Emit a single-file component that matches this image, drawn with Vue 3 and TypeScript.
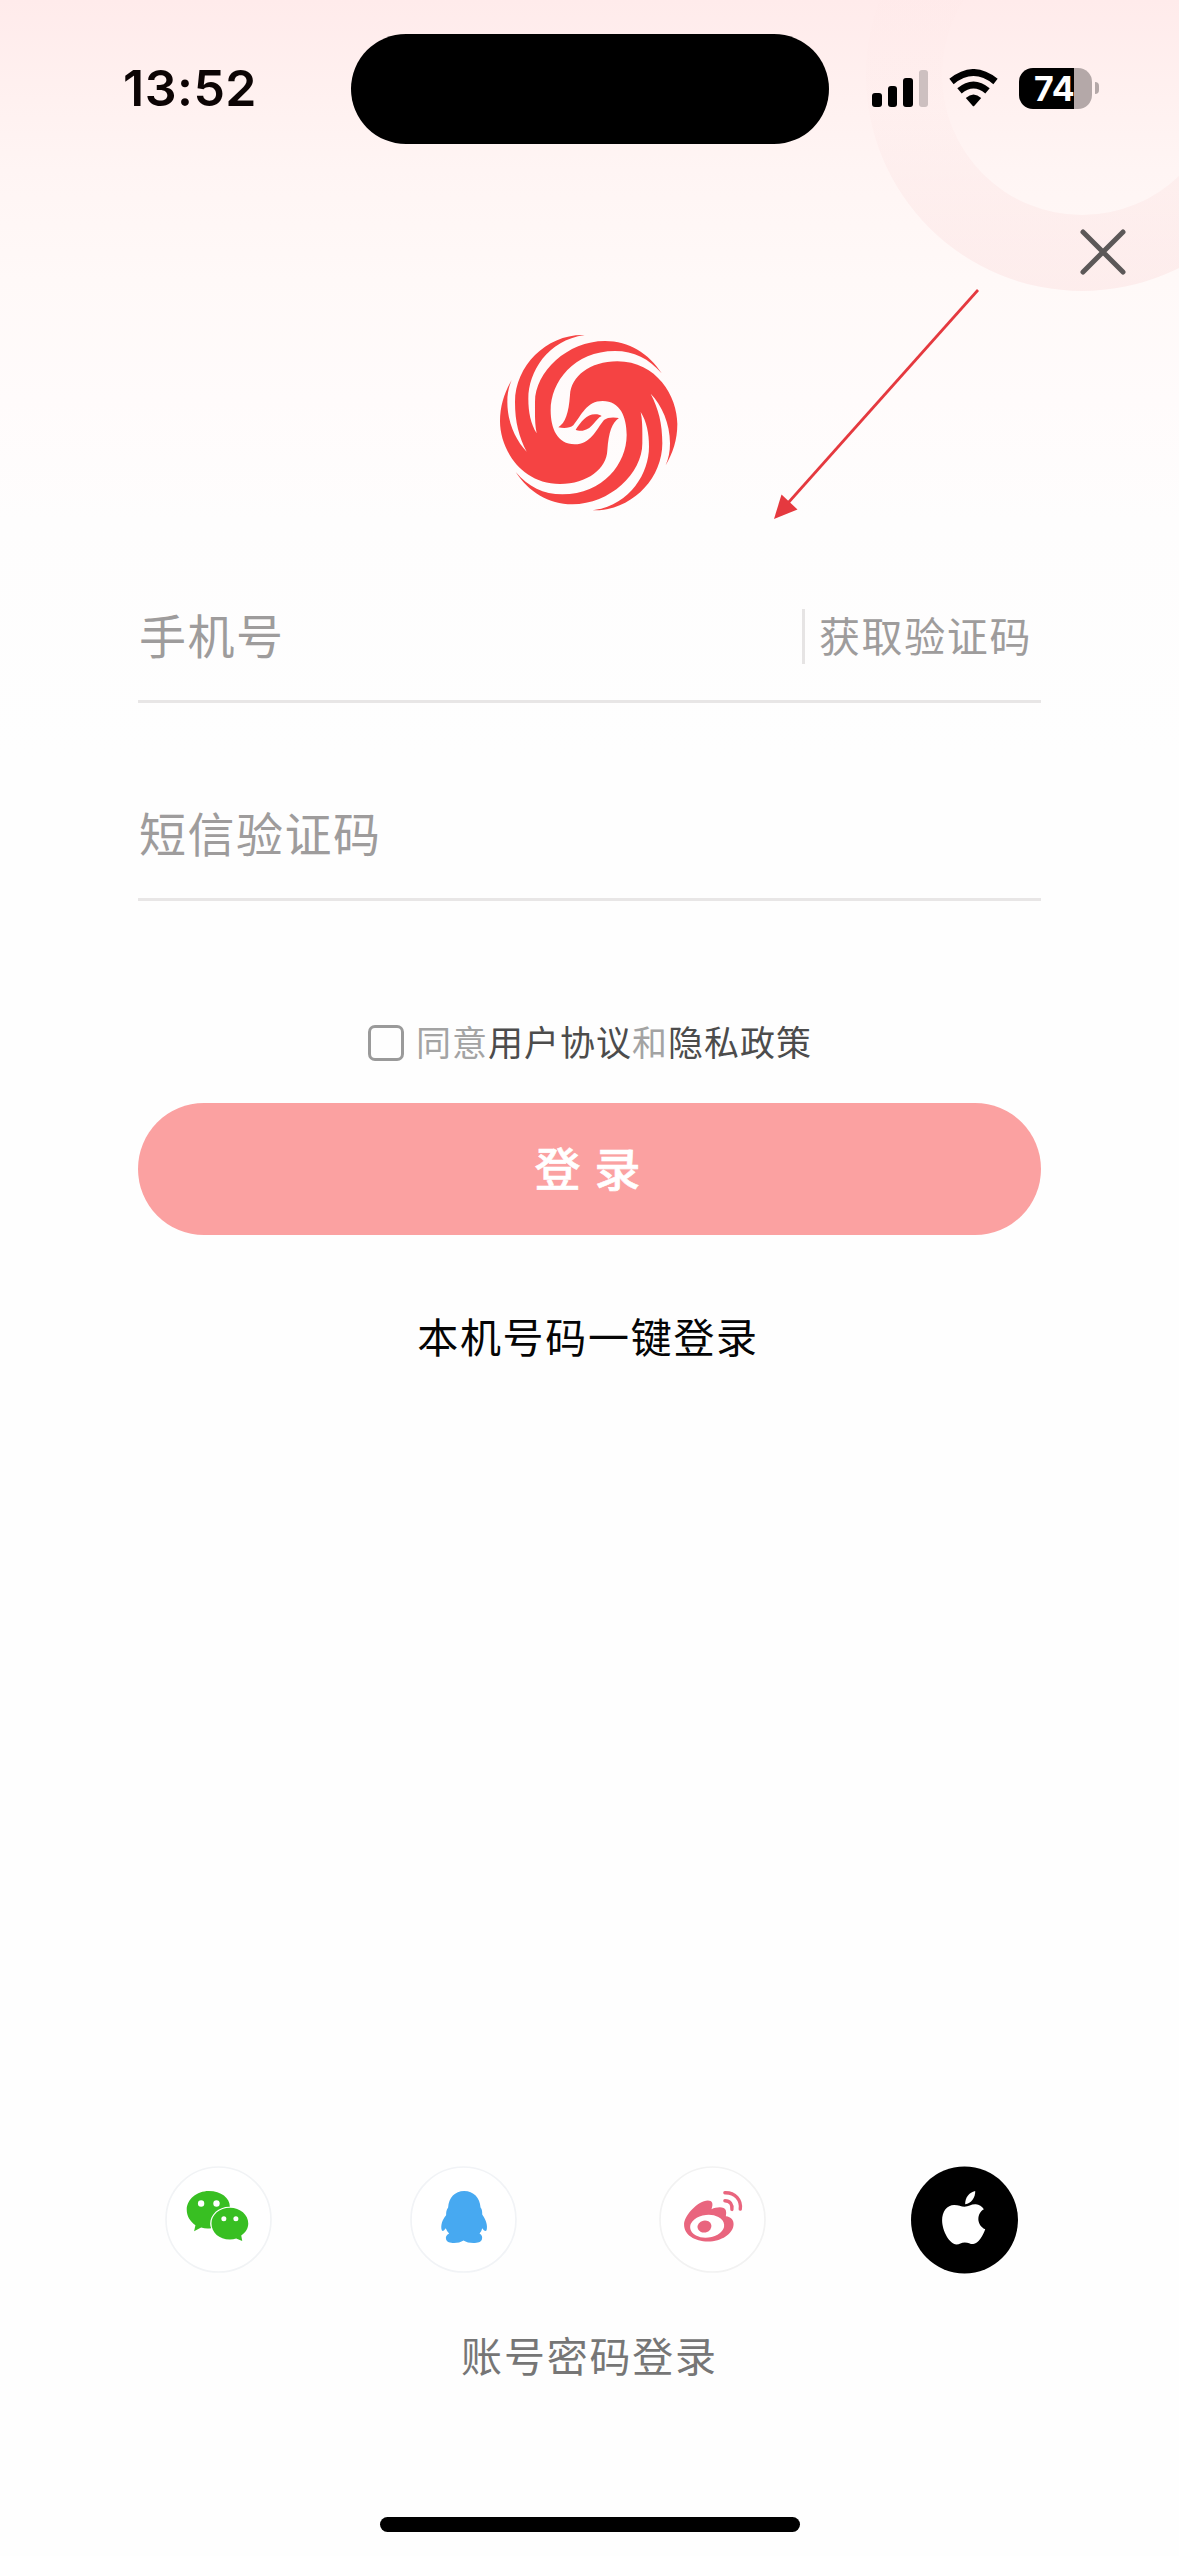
<script setup lang="ts">
import { ref } from 'vue'

interface Segment {
  text: string
  link: boolean
}

const time = '13:52'
const battery = 74
const agreed = ref(false)
const signalBars = [
  { height: 14, on: true },
  { height: 21, on: true },
  { height: 29, on: true },
  { height: 37, on: false },
]
const agreement: Segment[] = [
  { text: '同意', link: false },
  { text: '用户协议', link: true },
  { text: '和', link: false },
  { text: '隐私政策', link: true },
]
</script>

<template>
  <main class="screen">
    <svg class="ring" width="1179" height="320" viewBox="0 0 1179 320">
      <defs>
        <linearGradient id="ringFade" x1="0" y1="0" x2="0" y2="291" gradientUnits="userSpaceOnUse">
          <stop offset="0" stop-color="#fbdcdc" stop-opacity="0.04" />
          <stop offset="0.35" stop-color="#fbdcdc" stop-opacity="0.08" />
          <stop offset="0.6" stop-color="#fbdcdc" stop-opacity="0.26" />
          <stop offset="1" stop-color="#fbdcdc" stop-opacity="0.42" />
        </linearGradient>
      </defs>
      <path
        fill="url(#ringFade)"
        fill-rule="evenodd"
        d="M866 75a216 216 0 1 0 432 0a216 216 0 1 0-432 0ZM942 75a140 140 0 1 0 280 0a140 140 0 1 0-280 0Z"
      />
    </svg>

    <header class="status">
      <div class="time">{{ time }}</div>
      <div class="island"></div>
      <div class="indicators">
        <div class="signal">
          <i v-for="(bar, i) in signalBars" :key="i" :class="{ off: !bar.on }" :style="{ height: bar.height + 'px' }"></i>
        </div>
        <svg class="wifi" width="49" height="38" viewBox="0 0 49 38">
          <path d="M2.500 12.500Q24.500-5.500 46.500 12.500" fill="none" stroke="#000" stroke-width="6.800" />
          <path d="M10.500 21.800Q24.500 10 38.500 21.800" fill="none" stroke="#000" stroke-width="6.800" />
          <path d="M16.800 29Q24.500 22 32.200 29L25.400 36.800Q24.500 37.800 23.600 36.800Z" />
        </svg>
        <div class="battery"><span>{{ battery }}</span></div>
        <div class="nub"></div>
      </div>
    </header>

    <div class="close-row">
      <svg width="46" height="46" viewBox="0 0 46 46" fill="none" stroke="#5c5858" stroke-width="5" stroke-linecap="round">
        <path d="M3 3 43 43M43 3 3 43" />
      </svg>
    </div>

    <svg class="logo" width="220" height="210" viewBox="0 0 660 630" fill="#f54343">
      <defs>
        <path
          id="wing"
          d="M557 436C578 400 592 360 592 312C592 230 530 124 412 124C330 124 272 170 270 225C266 280 256 308 235 322C250 325 270 325 280 316C305 285 320 243 368 243C420 243 440 290 440 345C440 430 370 523 247 523C190 523 145 500 107 456C145 515 205 553 277 553C390 553 487 460 487 370C487 330 488 305 482 276C500 305 507 340 507 380C507 460 450 555 338 571C450 575 547 480 547 370C547 310 535 265 512 221C545 255 570 310 570 370C570 395 566 415 557 436Z"
        />
      </defs>
      <use href="#wing" />
      <use href="#wing" transform="rotate(180 326 308)" />
      <path d="M287 329C303 306 320 283 345 283C355 283 360 285 365 288C346 296 340 326 308 332C300 333 292 332 287 329Z" />
    </svg>

    <form class="form" @submit.prevent>
      <div class="field phone">
        <span class="hint">手机号</span>
        <span class="code"><span>获取验证码</span></span>
      </div>
      <div class="field sms"><span class="hint">短信验证码</span></div>

      <label class="agree">
        <span class="box" :class="{ checked: agreed }" @click="agreed = !agreed"></span>
        <span class="terms"><span v-for="s in agreement" :key="s.text" :class="{ link: s.link }">{{ s.text }}</span></span>
      </label>

      <button class="submit" type="submit"><span>登</span><span>录</span></button>
      <div class="one-tap">本机号码一键登录</div>
    </form>

    <div class="socials">
      <svg width="107" height="107" viewBox="48 47 320 320">
        <circle cx="208" cy="207" r="157" fill="#fff" stroke="#f1f3f5" stroke-width="5" />
        <g transform="translate(2 0)">
          <path fill="#38bf22" d="M177 122C214 122 240 143 240 169C207 168 181 192 181 220Q181 227 184 233Q168 235 154 231L133 242L137 224C121 213 111 197 111 178C111 147 141 122 177 122Z" />
          <path fill="#38bf22" d="M240 172C271 172 295 193 295 219C295 234 287 246 274 255L277 271L259 264Q250 267 240 267C208 267 185 246 185 219C185 193 209 172 240 172Z" />
          <g fill="#fff"><circle cx="154" cy="159" r="9.500" /><circle cx="200" cy="159" r="9.500" /><circle cx="222" cy="205" r="7.500" /><circle cx="258" cy="205" r="7.500" /></g>
        </g>
      </svg>
      <svg width="107" height="107" viewBox="781 47 320 320">
        <circle cx="941" cy="207" r="157" fill="#fff" stroke="#f1f3f6" stroke-width="5" />
        <path fill="#47a9f1" d="M943 122C971 122 990 142 992 171C997 177 997 184 997 192C1008 208 1014 225 1010 239C1007 244 1001 239 997 233Q995 243 989 249C997 253 998 260 996 267C993 280 957 281 941 270C925 281 892 280 889 267C887 260 889 253 898 249Q891 242 888 233C883 240 879 244 876 239C872 225 877 208 889 194C889 185 890 177 895 171C897 142 915 122 943 122Z" />
      </svg>
      <svg width="107" height="107" viewBox="57 47 320 320">
        <circle cx="217" cy="207" r="157" fill="#fff" stroke="#f2f2f2" stroke-width="5" />
        <path fill="#e9657e" d="M203 150C217 150 220 160 214 176C230 169 253 167 257 180Q259 188 257 197C273 199 281 209 280 222C279 250 243 273 204 273C163 273 132 253 132 223C132 194 174 151 203 150Z" />
        <ellipse cx="201" cy="227" rx="51" ry="34" fill="#fff" transform="rotate(-6 201 227)" />
        <ellipse cx="193" cy="228" rx="21" ry="18" fill="#e9657e" transform="rotate(-12 193 228)" />
        <g fill="none" stroke="#e9657e" stroke-width="10" stroke-linecap="round"><path d="M254 127C285 126 304 149 300 176" /><path d="M254 151C270 151 277 163 275 177" /></g>
      </svg>
      <svg width="107" height="108" viewBox="813 49 320 322">
        <circle cx="973" cy="210" r="160" />
        <path fill="#fff" d="M973 170C985 170 994 162 1007 163Q1022 164 1031 178C1009 190 1008 225 1035 238C1028 258 1014 282 999 282C989 282 985 277 974 277C963 277 958 283 949 283C928 283 906 242 906 211C906 184 921 165 942 165C955 165 963 170 973 170Z" />
        <path fill="#fff" d="M975 163C974 143 987 127 1005 123C1006 142 993 160 975 163Z" />
      </svg>
    </div>

    <div class="password">账号密码登录</div>
    <div class="home"></div>

    <svg class="arrow" width="210" height="236" viewBox="772 287 210 236">
      <path d="M978 290 788 503" stroke="#e5393f" stroke-width="2.700" />
      <path d="M774 519 781.500 494.500 797.500 509.500Z" fill="#e5393f" />
    </svg>
  </main>
</template>

<style>
body {
  margin: 0;
  background: #fefefe;
}
</style>

<style scoped>
.screen {
  position: relative;
  width: 1179px;
  height: 2556px;
  overflow: hidden;
  display: flex;
  flex-direction: column;
  font-family: "Noto Sans CJK SC", sans-serif;
  background: linear-gradient(#ffebeb 0, #fff1f0 100px, #fff5f4 170px, #fff9f8 280px, #fffbfb 400px, #fefdfd 520px, #fefefe 760px);
}
.ring {
  position: absolute;
  top: 0;
  left: 0;
}
.status {
  position: relative;
  display: flex;
  height: 176px;
  flex: none;
}
.time {
  width: 228px;
  padding: 57px 0 0 123px;
  font: 600 50px/62px Inter, sans-serif;
  letter-spacing: 0.500px;
  color: #0c0404;
}
.island {
  flex: none;
  width: 478px;
  height: 110px;
  margin-top: 34px;
  border-radius: 55px;
  background: #000;
}
.indicators {
  display: flex;
  align-items: center;
  height: 42px;
  margin: 67px 0 0 43px;
}
.signal {
  display: flex;
  align-items: flex-end;
  gap: 6px;
  height: 38px;
  width: 77px;
}
.signal i {
  width: 9.500px;
  flex: none;
  border-radius: 3px;
  background: #000;
}
.signal i.off {
  background: #cdc0c0;
}
.wifi {
  flex: none;
}
.battery {
  flex: none;
  width: 73px;
  height: 41px;
  margin-left: 21px;
  border-radius: 14px;
  background: linear-gradient(90deg, #000 55px, #b4a8a8 55px);
  color: #fff;
  font: 700 34px/41px Inter, sans-serif;
  letter-spacing: 0;
}
.battery span {
  margin-left: 15px;
}
.nub {
  width: 4px;
  height: 12px;
  margin-left: 3px;
  border-radius: 0 5px 5px 0;
  background: #b4a8a8;
}
.close-row {
  position: relative;
  display: flex;
  justify-content: flex-end;
  flex: none;
  height: 91px;
  padding: 53px 53px 0 0;
}
.logo {
  flex: none;
  margin-left: 480px;
}
.form {
  width: 903px;
  margin: 0 auto;
  display: flex;
  flex-direction: column;
}
.field {
  display: flex;
  align-items: center;
  justify-content: space-between;
  box-sizing: border-box;
  border-bottom: 3px solid #e8e6e6;
  color: #9e9c9c;
}
.phone {
  margin-top: 41px;
  height: 132px;
  padding-bottom: 2px;
}
.sms {
  height: 198px;
  padding-top: 64px;
}
.hint {
  margin: -2px 0 0 1px;
  font-size: 47px;
  line-height: 66px;
  letter-spacing: 1.500px;
}
.code {
  display: flex;
  align-items: center;
  height: 55px;
  margin-top: 4px;
  padding: 0 9px 0 14px;
  border-left: 3px solid #e6e4e4;
  font-size: 41px;
  line-height: 55px;
  letter-spacing: 1.600px;
}
.code span {
  margin-top: -5px;
}
.agree {
  display: flex;
  align-items: center;
  height: 60px;
  margin: 112px 0 0 230px;
}
.box {
  box-sizing: border-box;
  width: 36px;
  height: 36px;
  border: 3px solid #9a9a9a;
  border-radius: 7px;
}
.box.checked {
  background: #f54343;
}
.terms {
  margin: -6px 0 0 12px;
  font-size: 35px;
  letter-spacing: 1px;
  white-space: nowrap;
  color: #a3a3a3;
}
.link {
  color: #4c4c4c;
}
.submit {
  display: flex;
  align-items: center;
  justify-content: center;
  gap: 14px;
  height: 132px;
  margin-top: 30px;
  padding: 0 4px 6px 0;
  border: 0;
  border-radius: 66px;
  background: #fba1a1;
  color: #fff;
  font: 500 46px "Noto Sans CJK SC", sans-serif;
  -webkit-text-stroke: 0.600px #fff;
}
.one-tap {
  margin: 68px 3px 0 0;
  font-size: 41px;
  line-height: 64px;
  letter-spacing: 1.700px;
  text-align: center;
  color: #050505;
}
.socials {
  display: flex;
  flex: none;
  gap: 141px;
  margin: auto 0 0 165px;
}
.socials svg:nth-child(2) {
  margin-left: -3px;
}
.socials svg:nth-child(3) {
  margin-left: 1px;
}
.socials svg:nth-child(4) {
  margin-left: 4px;
}
.password {
  margin: 48px 0 0;
  font-size: 41px;
  line-height: 64px;
  letter-spacing: 1.800px;
  text-align: center;
  color: #767676;
}
.home {
  flex: none;
  width: 420px;
  height: 15px;
  margin: 131px 0 24px 380px;
  border-radius: 8px;
  background: #000;
}
.arrow {
  position: absolute;
  left: 772px;
  top: 287px;
}
</style>
